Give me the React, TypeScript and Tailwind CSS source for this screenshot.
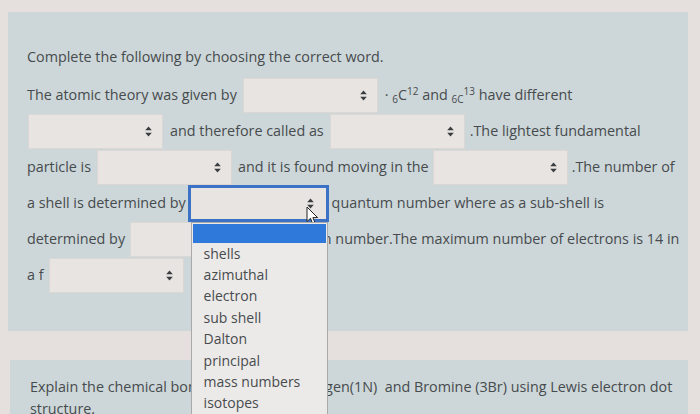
import React from "react";

const font = { fontFamily: '"Open Sans", "Noto Sans", sans-serif' };

function Arrows() {
  return (
    <svg width="7" height="11" viewBox="0 0 7 11" className="shrink-0">
      <path d="M3.5 0.5 L6.8 4.3 H0.2 Z" fill="#3a3d40" />
      <path d="M3.5 10.5 L6.8 6.7 H0.2 Z" fill="#3a3d40" />
    </svg>
  );
}

function Sel({ className = "" }: { className?: string }) {
  return (
    <div
      className={`flex h-[35px] w-[135px] shrink-0 items-center justify-end border border-[#dbd7d4] bg-[#e7e4e2] pr-[10px] ${className}`}
    >
      <Arrows />
    </div>
  );
}

function Cursor() {
  return (
    <svg width="13" height="20" viewBox="0 0 13 20" className="absolute left-[118px] top-[21px]">
      <path
        d="M1 1 L1 15.5 L4.5 12.3 L7 18.5 L9.3 17.5 L6.9 11.6 L11.6 11.6 Z"
        fill="#ffffff"
        stroke="#222"
        strokeWidth="1"
        strokeLinejoin="round"
      />
    </svg>
  );
}

const options = ["shells", "azimuthal", "electron", "sub shell", "Dalton", "principal", "mass numbers", "isotopes"];

export default function App() {
  return (
    <div className="h-[414px] w-[700px] overflow-hidden bg-[#e5e0de] pt-[12px] text-[14.35px] text-[#474b4e]" style={font}>
      <div className="ml-[8px] w-[680px] bg-[#cdd7d9] pb-[38px] pl-[19px] pt-[33px]">
        <div className="h-6 leading-6">Complete the following by choosing the correct word.</div>

        <div className="mt-[8px] flex flex-col">
          <div className="flex h-[36px] items-center whitespace-nowrap">
            <span>The atomic theory was given by</span>
            <Sel className="ml-[6px]" />
            <span className="ml-[7px]">
              · <sub className="text-[10px]">6</sub>C<sup className="text-[10px]">12</sup> and{" "}
              <sub className="text-[10px]">6C</sub>
              <sup className="text-[10px]">13</sup> have different
            </span>
          </div>

          <div className="flex h-[36px] items-center whitespace-nowrap">
            <Sel className="ml-px" />
            <span className="ml-[7px]">and therefore called as</span>
            <Sel className="ml-[6px]" />
            <span className="ml-[5px]">.The lightest fundamental</span>
          </div>

          <div className="flex h-[36px] items-center whitespace-nowrap">
            <span>particle is</span>
            <Sel className="ml-[6px]" />
            <span className="ml-[6px]">and it is found moving in the</span>
            <Sel className="ml-[4px]" />
            <span className="ml-[4px]">.The number of</span>
          </div>

          <div className="flex h-[36px] items-center whitespace-nowrap">
            <span>a shell is determined by</span>
            <div className="relative ml-[2px] shrink-0">
              <div className="flex h-[37px] w-[141px] items-center justify-end border-[3px] border-[#3c72c6] bg-[#e7e4e2] pr-[12px]">
                <Arrows />
              </div>
              <Cursor />
              <div className="absolute left-[3px] top-full z-10 w-[137px] border border-[#a9a9a9] bg-[#eceae8] pt-px text-[14px]">
                <div className="mx-px h-[19px] bg-[#2f79da]" />
                <ul className="pl-[12px] leading-[21.4px]">
                  {options.map((o) => (
                    <li key={o}>{o}</li>
                  ))}
                </ul>
              </div>
            </div>
            <span className="ml-[3px]">quantum number where as a sub-shell is</span>
          </div>

          <div className="flex h-[36px] items-center whitespace-nowrap">
            <span>determined by</span>
            <Sel className="ml-[5px]" />
            <span className="ml-[5px]">quantum number.The maximum number of electrons is 14 in</span>
          </div>

          <div className="flex h-[36px] items-center whitespace-nowrap">
            <span>a f</span>
            <Sel className="ml-[5px]" />
          </div>
        </div>
      </div>

      <div className="ml-[10px] mt-[29px] w-[678px] bg-[#cdd7d9] pl-[20px] pt-[16px] leading-[22px]">
        <div className="whitespace-nowrap">Explain the chemical bonding between Nitrogen(1N)&nbsp; and Bromine (3Br) using Lewis electron dot</div>
        <div>structure.</div>
      </div>
    </div>
  );
}
